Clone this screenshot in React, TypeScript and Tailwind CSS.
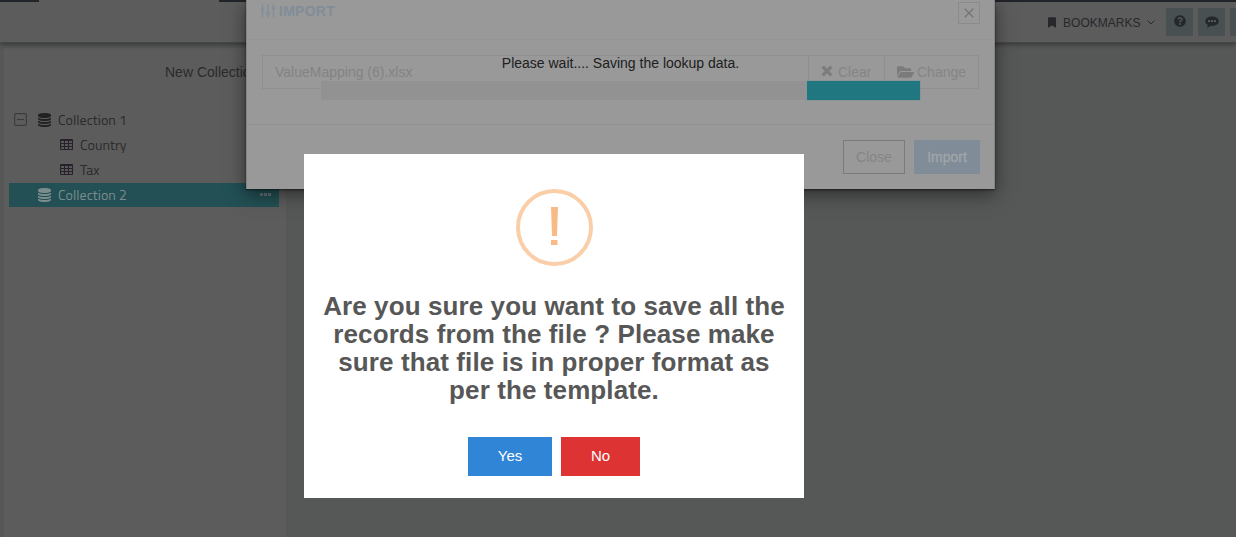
import React from 'react';
import { FaBookmark, FaFolderOpen, FaQuestionCircle } from 'react-icons/fa';

function DatabaseIcon({ className }: { className: string }) {
  return (
    <svg viewBox="0 0 1536 1792" className={className} fill="currentColor" preserveAspectRatio="none">
      <path d="M768 768q237 0 443-43t325-127v170q0 69-103 128t-280 93.5-385 34.5-385-34.5-280-93.5-103-128v-170q119 84 325 127t443 43zm0 768q237 0 443-43t325-127v170q0 69-103 128t-280 93.5-385 34.5-385-34.5-280-93.5-103-128v-170q119 84 325 127t443 43zm0-384q237 0 443-43t325-127v170q0 69-103 128t-280 93.5-385 34.5-385-34.5-280-93.5-103-128v-170q119 84 325 127t443 43zm0-1152q208 0 385 34.5t280 93.5 103 128v128q0 69-103 128t-280 93.5-385 34.5-385-34.5-280-93.5-103-128v-128q0-69 103-128t280-93.5 385-34.5z" />
    </svg>
  );
}

function TableIcon() {
  return (
    <svg viewBox="0 0 13 11" className="h-[11px] w-[13px] shrink-0 text-[#28202a]" fill="none" stroke="currentColor">
      <rect x=".5" y=".5" width="12" height="10" rx=".8" strokeWidth="1.200" />
      <path d="M1 1.500h11M1 4.500h11M1 7.500h11M4.500 2v8.500M8.500 2v8.500" strokeWidth="1.100" />
    </svg>
  );
}

function SlidersIcon() {
  return (
    <svg viewBox="0 0 14 14" className="mr-[4px] h-[14px] w-[14px] shrink-0" fill="none" stroke="currentColor" strokeWidth="1.300">
      <path d="M1.500 0v5M1.500 8v6M7 0v8M7 11v3M12.500 0v2M12.500 5v9" />
      <circle cx="1.700" cy="6.500" r="1.300" />
      <circle cx="7" cy="9.300" r="1.400" />
      <circle cx="12.300" cy="3.600" r="1.300" />
    </svg>
  );
}

function Header() {
  return (
    <header className="relative h-[43px] shrink-0 border-b border-[#474747] bg-[#5c5c5c] shadow-[0_1px_5px_rgba(0,0,0,0.45)]">
      <div className="flex h-[2px] bg-[#212429]">
        <div className="ml-[39px] w-[180px] bg-[#5c5c5c]" />
      </div>
      <div className="flex h-[40px] items-center pl-[1048px] text-[#27282b]">
        <FaBookmark className="h-[11px] w-[8px] shrink-0" />
        <span className="ml-[7px] mt-[2px] w-[77px] text-[12px] leading-4 tracking-[0.03px]">BOOKMARKS</span>
        <svg viewBox="0 0 8 5" className="ml-[7px] mt-[1px] h-[5px] w-[8px] shrink-0" fill="none" stroke="currentColor">
          <path d="M.7.7 4 4 7.300.7" />
        </svg>
        <div className="ml-[11px] flex h-7 w-[27px] shrink-0 items-center justify-center bg-[#495052]">
          <FaQuestionCircle className="mb-[2px] h-3 w-3 text-[#24282b]" />
        </div>
        <div className="ml-[5px] flex h-7 w-[27px] shrink-0 items-center justify-center bg-[#495052]">
          <svg viewBox="0 0 14 12" className="h-3 w-[14px]">
            <path fill="#24282b" d="M7 .5c3.700 0 6.800 2 6.800 4.700S10.700 9.900 7 9.900l-1.100-.1c-1.300 1-2.700 1.600-4.200 1.700.8-.8 1.100-1.600 1.200-2.500C1.200 8.200.2 6.900.2 5.200.2 2.500 3.300.5 7 .5Z" />
            <path fill="#596061" d="M3 4.200h2v1.800H3zM6 4.200h2v1.800H6zM9 4.200h2v1.800H9z" />
          </svg>
        </div>
        <div className="ml-[5px] h-7 w-[6px] shrink-0 bg-[#495052]" />
      </div>
    </header>
  );
}

function Sidebar() {
  return (
    <aside className="ml-1 mt-[5px] w-[282px] bg-[#5c5c5c] text-[#2b2b2b]">
      <div className="ml-[161px] pt-[16px] text-sm leading-4">New Collection</div>
      <div className="ml-[5px] mt-[27px] w-[270px] font-['Titillium_Web','Noto_Sans',sans-serif] text-[14px] leading-5 tracking-[0.05px]">
        <div className="flex h-[25px] items-center pl-[5px]">
          <svg viewBox="0 0 13 13" className="mr-[11px] h-[13px] w-[13px]" fill="none" stroke="#3c3c3c">
            <rect x=".6" y=".6" width="11.800" height="11.800" rx="1.500" strokeWidth="1.200" />
            <path d="M3 6.500h7" strokeWidth="1.200" />
          </svg>
          <DatabaseIcon className="h-[14px] w-[13px] text-[#222]" />
          <span className="ml-[7px]">Collection 1</span>
        </div>
        <div className="flex h-[25px] items-center pl-[51px]"><TableIcon /><span className="ml-[7px]">Country</span></div>
        <div className="flex h-[25px] items-center pl-[51px]"><TableIcon /><span className="ml-[7px]">Tax</span></div>
        <div className="mt-[1px] flex h-[24px] items-center bg-[#225054] pl-[29px] text-[#7b8c8d]">
          <DatabaseIcon className="h-[14px] w-[13px]" />
          <span className="ml-[7px]">Collection 2</span>
          <div className="mb-[2px] ml-auto mr-2 flex gap-[1px]">
            <i className="h-[3px] w-[3px] bg-[#5f7273]" /><i className="h-[3px] w-[3px] bg-[#5f7273]" /><i className="h-[3px] w-[3px] bg-[#5f7273]" />
          </div>
        </div>
      </div>
    </aside>
  );
}

function ImportModal() {
  return (
    <section className="absolute left-[246px] top-0 h-[189px] w-[749px] border-x border-[#858585] bg-[#999] text-[#858585] shadow-[0_1px_2px_rgba(0,0,0,0.5),0_5px_18px_rgba(0,0,0,0.5)]">
      <div className="flex h-10 items-start justify-between border-b border-[#949494] pl-[14px] pr-[14px] pt-[3px]">
        <h2 className="flex items-center text-sm font-bold leading-4 tracking-[0.25px] text-[#818d98]"><SlidersIcon />IMPORT</h2>
        <button className="-mt-[1px] flex h-[22px] w-[22px] items-center justify-center border border-[#8b8b8b]">
          <svg viewBox="0 0 10 10" className="h-[10px] w-[10px]" stroke="#747474" strokeWidth="1.300"><path d="m.7.7 8.600 8.600m0-8.600L.7 9.300" /></svg>
        </button>
      </div>
      <div className="h-[85px] border-b border-[#929292] px-[15px] pt-[15px]">
        <div className="flex h-[34px] border border-[#8f8f8f] text-sm">
          <div className="flex w-[546px] items-center border-r border-[#8f8f8f] pl-[12px] text-[#838383]">ValueMapping (6).xlsx</div>
          <div className="flex w-[76px] items-center border-r border-[#8f8f8f] pl-[12px]">
            <svg viewBox="0 0 12 12" className="mb-[2px] mr-[5px] h-3 w-3 shrink-0" stroke="#7c7c7c" strokeWidth="3.300"><path d="m1.700 1.700 8.600 8.600m0-8.600-8.600 8.600" /></svg>
            Clear
          </div>
          <div className="flex items-center pl-[12px]"><FaFolderOpen className="mr-[3px] h-[16px] w-[17px] text-[#7b7b7b]" />Change</div>
        </div>
      </div>
      <div className="flex justify-end gap-[9px] pr-[14px] pt-[15px] text-sm">
        <button className="h-[34px] w-[62px] border border-[#7b7b7b]">Close</button>
        <button className="h-[34px] w-[66px] bg-[#808c97] text-[#a1a6aa] [-webkit-text-stroke:0.3px_currentColor]">Import</button>
      </div>
    </section>
  );
}

function SavingProgress() {
  return (
    <div className="absolute left-[321px] top-[54px] w-[599px]">
      <div className="text-center text-sm leading-[18px] text-[#202020]">Please wait.... Saving the lookup data.</div>
      <div className="mt-[9px] flex h-[19px] bg-[#929292]">
        <div className="ml-auto w-[113px] bg-[#21777f] shadow-[0_0_0_1px_#8b9595]" />
      </div>
    </div>
  );
}

function ConfirmDialog() {
  return (
    <div role="dialog" className="absolute left-[304px] top-[154px] flex h-[344px] w-[500px] flex-col items-center bg-white pt-[35px] text-[#575757]">
      <svg viewBox="0 0 77 77" className="h-[77px] w-[77px] shrink-0">
        <circle cx="38.500" cy="38.500" r="36.500" fill="none" stroke="#facea8" strokeWidth="4" />
        <path fill="#f8bb86" d="M35 18h7l-1 29h-5zM35 51h6.500v5H35z" />
      </svg>
      <h1 className="mt-[26px] text-center text-[26px] font-bold leading-7 tracking-[0.1px]">
        Are you sure you want to save all the<br />records from the file ? Please make<br />sure that file is in proper format as<br />per the template.
      </h1>
      <div className="mt-[33px] flex gap-[9px] text-[15px] text-white">
        <button className="h-[39px] w-[84px] bg-[#3085d6]">Yes</button>
        <button className="h-[39px] w-[79px] bg-[#dd3333]">No</button>
      </div>
    </div>
  );
}

export default function App() {
  return (
    <main className="relative flex h-[537px] w-[1236px] flex-col overflow-hidden bg-[#565857] font-['Liberation_Sans',Arial,sans-serif]">
      <Header />
      <div className="flex flex-1"><Sidebar /></div>
      <ImportModal />
      <SavingProgress />
      <ConfirmDialog />
    </main>
  );
}
